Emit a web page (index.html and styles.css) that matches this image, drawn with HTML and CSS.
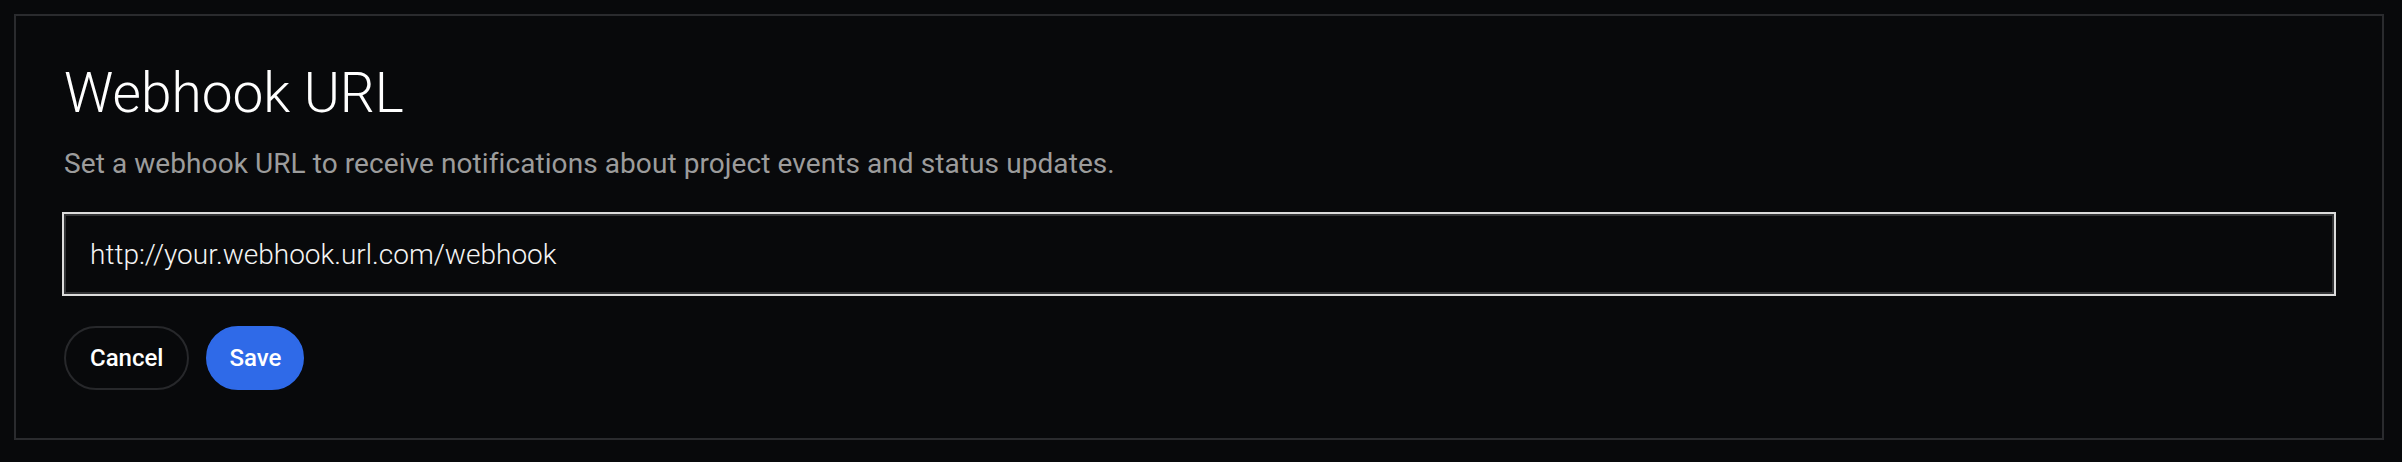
FILE: index.html
```html
<!DOCTYPE html>
<html>
<head>
    <title>Webhook URL</title>
    <meta name="viewport" content="width=device-width, initial-scale=1">
    <link rel="stylesheet" href="styles.css">
</head>
<body>
    <div class="panel">
        <h2 class="title">Webhook URL</h2>
        <p class="subtitle">Set a webhook URL to receive notifications about project events and status updates.</p>
        <form class="webhook-form">
            <input type="text" class="url-input" value="http://your.webhook.url.com/webhook">
            <div class="actions">
                <button type="button" class="btn btn-cancel">Cancel</button>
                <button type="button" class="btn btn-save">Save</button>
            </div>
        </form>
    </div>
</body>
</html>
```

FILE: styles.css
```css
body {
    margin: 0;
    padding: 14px 18px 0 14px;
    background-color: #08090b;
    font-family: Roboto, "Liberation Sans", sans-serif;
    color: #f4f4f4;
}
.panel {
    box-sizing: border-box;
    height: 426px;
    padding: 48px;
    border: 2px solid #2a2b2e;
}
.title {
    margin: 2px 0 0;
    font-size: 55px;
    font-weight: 300;
    line-height: 1;
    color: #ffffff;
}
.subtitle {
    margin: 25px 0 0;
    font-size: 28px;
    line-height: 1.3;
    letter-spacing: 0.08px;
    color: #9c9c9c;
}
.webhook-form {
    margin-top: 32px;
}
.url-input {
    display: block;
    box-sizing: border-box;
    width: 100%;
    height: 80px;
    padding: 0 24px;
    background-color: #08090b;
    border: 2px solid #333436;
    outline: 2px solid #dcdcdc;
    font-family: inherit;
    font-size: 28px;
    font-weight: 300;
    color: #f4f4f4;
}
.actions {
    display: flex;
    gap: 17px;
    margin-top: 32px;
}
.btn {
    height: 64px;
    padding: 0 24px;
    border-radius: 32px;
    font-family: inherit;
    font-size: 24px;
    font-weight: 500;
    color: #ffffff;
    cursor: pointer;
}
.btn-cancel {
    background-color: transparent;
    border: 2px solid #27282b;
}
.btn-save {
    padding: 0 21px;
    background-color: #2f6ae8;
    border: 2px solid #2f6ae8;
}
```
